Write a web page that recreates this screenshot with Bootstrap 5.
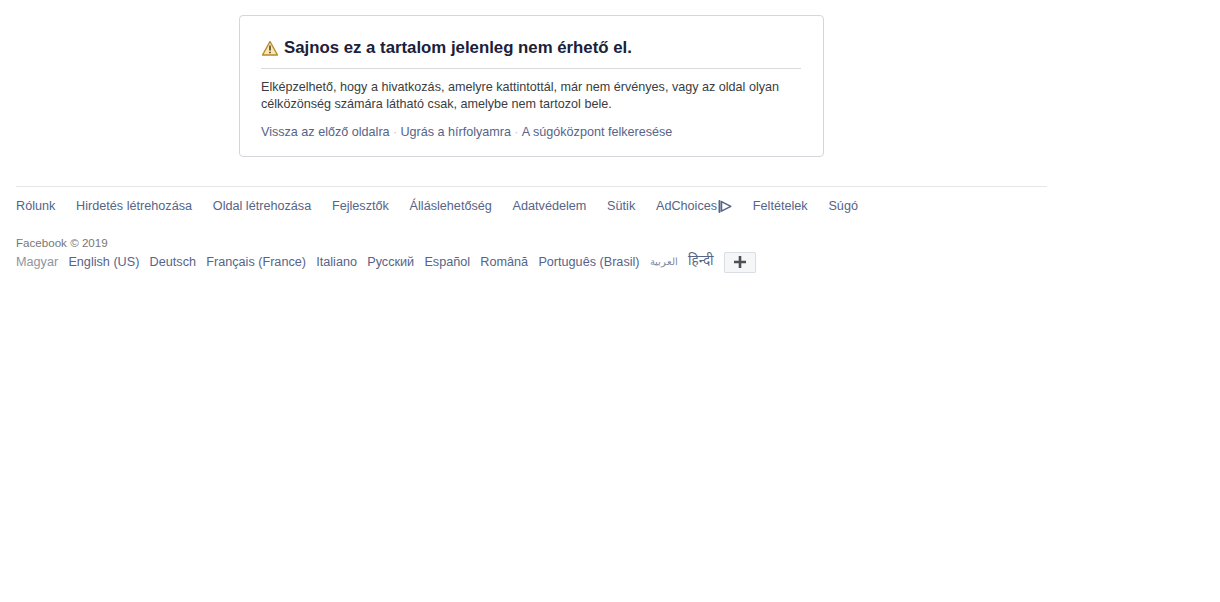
<!DOCTYPE html>
<html lang="hu">

<head>
    <meta charset="UTF-8">
    <meta name="viewport" content="width=device-width, initial-scale=1.0">
    <title>Facebook</title>
    <link href="https://cdn.jsdelivr.net/npm/bootstrap@5.3.0/dist/css/bootstrap.min.css" rel="stylesheet">
    <style>
        body {
            background-color: #fff;
            font-family: "Liberation Sans", "Noto Sans", sans-serif;
            font-size: 12px;
            color: #1d2129;
        }

        a {
            color: #566488;
            text-decoration: none;
        }

        .page-wrap {
            width: 1031px;
            margin-left: 16px;
            padding-top: 15px;
        }

        .error-box {
            width: 585px;
            height: 142px;
            margin-left: 223px;
            padding: 22px 22px 0 21px;
            border: 1px solid #d3d6db;
            border-radius: 4px;
            font-size: 12.6px;
        }

        .error-title {
            font-size: 16.8px;
            font-weight: 700;
            line-height: 20px;
            color: #1a2138;
            padding-bottom: 10px;
            border-bottom: 1px solid #d8dade;
            margin: 0 0 10px;
            gap: 5px;
        }

        .error-text {
            line-height: 17px;
            margin: 0 0 10px;
            color: #3a3d42;
        }

        .sep {
            color: #c3c8d2;
            margin: 0 3.3px;
        }

        .foot-links {
            margin-top: 29px;
            padding-top: 12px;
            border-top: 1px solid #e5e6e9;
            gap: 20.75px;
            line-height: 15px;
            font-size: 12.65px;
        }

        .copy-line {
            margin-top: 22px;
            color: #777;
            font-size: 11.6px;
            line-height: 14px;
        }

        .lang-links {
            gap: 10.25px;
            margin-top: 1px;
            font-size: 12.65px;
            line-height: 22px;
        }

        .lang-cur {
            color: #90949c;
        }

        .lang-ar {
            font-size: 10px;
            color: #7d87a1;
        }

        .lang-hi {
            font-size: 13.5px;
            margin-top: -2px;
        }

        .adc-icon {
            margin-left: 1px;
        }

        .more-btn {
            width: 32px;
            height: 21px;
            background: #f5f6f7;
            border: 1px solid #dadde1;
            border-radius: 2px;
            box-shadow: 0 1px 1px rgba(0, 0, 0, .06);
            padding: 0;
        }
    </style>
</head>

<body>
    <div class="page-wrap">
        <div class="error-box">
            <h2 class="error-title d-flex align-items-center">
                <svg width="18" height="16" viewBox="0 0 18 16">
                    <path d="M9 1.5 16.5 15h-15z" fill="#f7e7b0" stroke="#b8892a" stroke-width="1.4" stroke-linejoin="round"/>
                    <path d="M9 5.5v5M9 11.7v1.6" stroke="#4a3b1c" stroke-width="1.5"/>
                </svg>
                Sajnos ez a tartalom jelenleg nem érhető el.
            </h2>
            <p class="error-text">Elképzelhető, hogy a hivatkozás, amelyre kattintottál, már nem érvényes, vagy az oldal olyan<br>célközönség számára látható csak, amelybe nem tartozol bele.</p>
            <div>
                <a href="#">Vissza az előző oldalra</a><span class="sep">·</span><a href="#">Ugrás a hírfolyamra</a><span class="sep">·</span><a href="#">A súgóközpont felkeresése</a>
            </div>
        </div>

        <div class="foot-links d-flex">
            <a href="#">Rólunk</a>
            <a href="#">Hirdetés létrehozása</a>
            <a href="#">Oldal létrehozása</a>
            <a href="#">Fejlesztők</a>
            <a href="#">Álláslehetőség</a>
            <a href="#">Adatvédelem</a>
            <a href="#">Sütik</a>
            <a href="#" class="d-flex align-items-center">AdChoices<svg class="adc-icon" width="14" height="13" viewBox="0 0 14 13">
                    <path d="M1.5 1v11" stroke="#566488" stroke-width="2" stroke-linecap="round"/>
                    <path d="M3.5 1.6 12.8 6.4 3.5 11.2z" fill="none" stroke="#566488" stroke-width="1.5" stroke-linejoin="round"/>
                </svg></a>
            <a href="#">Feltételek</a>
            <a href="#">Súgó</a>
        </div>

        <div class="copy-line">Facebook © 2019</div>
        <div class="lang-links d-flex align-items-center">
            <span class="lang-cur">Magyar</span>
            <a href="#">English (US)</a>
            <a href="#">Deutsch</a>
            <a href="#">Français (France)</a>
            <a href="#">Italiano</a>
            <a href="#">Русский</a>
            <a href="#">Español</a>
            <a href="#">Română</a>
            <a href="#">Português (Brasil)</a>
            <a href="#" class="lang-ar">العربية</a>
            <a href="#" class="lang-hi">हिन्दी</a>
            <button type="button" class="more-btn d-flex align-items-center justify-content-center">
                <svg width="14" height="14" viewBox="0 0 14 14"><path d="M7 1v12M1 7h12" stroke="#4b4f56" stroke-width="2.6"/></svg>
            </button>
        </div>
    </div>

    <script src="https://cdn.jsdelivr.net/npm/bootstrap@5.3.0/dist/js/bootstrap.bundle.min.js"></script>
</body>

</html>
